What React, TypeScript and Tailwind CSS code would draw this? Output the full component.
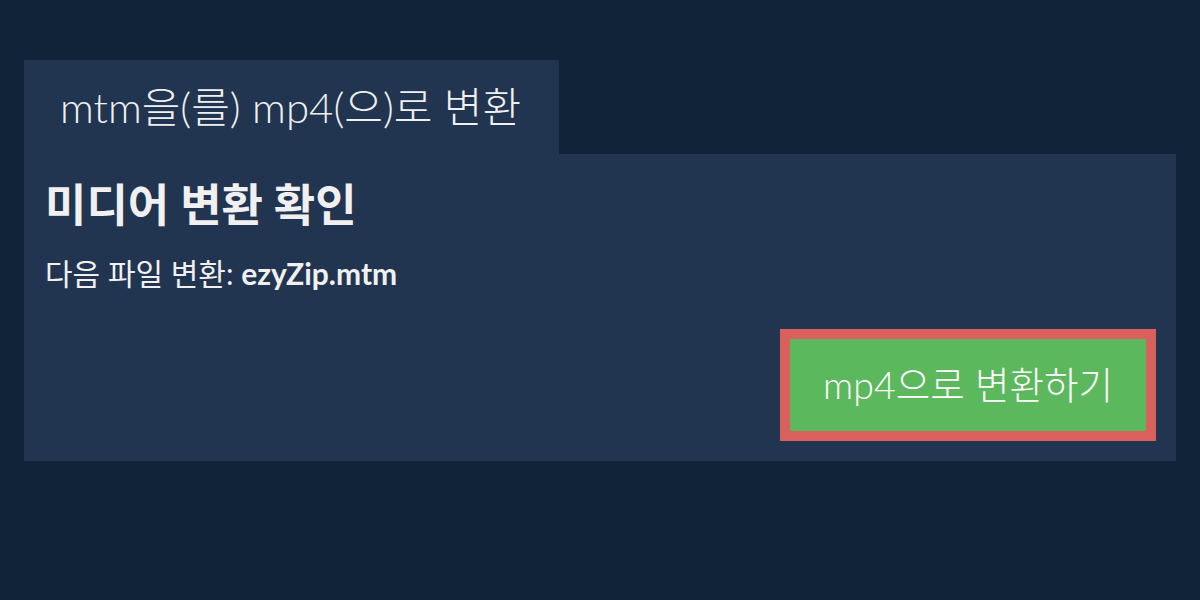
export default function App() {
  const font = { fontFamily: 'Lato, "Noto Sans CJK KR", sans-serif' };
  return (
    <div className="w-[1200px] h-[600px] bg-[#102339] pt-[60px] px-[24px]" style={font}>
      <div className="flex">
        <div className="h-[94px] bg-[#213550] pl-[36px] pr-[38px] flex items-center">
          <span className="text-[42px] font-light text-[#f0f0f0] leading-none">mtm을(를) mp4(으)로 변환</span>
        </div>
      </div>
      <div className="h-[307px] bg-[#213550] pl-[21px] pr-[20px] pt-[24px] flex flex-col">
        <h1 className="text-[45px] font-bold text-[#f0f0f0] leading-[54px]">미디어 변환 확인</h1>
        <p className="mt-[24px] text-[30px] text-[#f0f0f0] leading-[34px]">
          다음 파일 변환: <b className="font-bold">ezyZip.mtm</b>
        </p>
        <div className="flex justify-end mt-[39px]">
          <button className="w-[376px] h-[112px] border-[10px] border-[#d9605c] bg-[#5cb85c] text-white text-[37.5px] font-light">
            mp4으로 변환하기
          </button>
        </div>
      </div>
    </div>
  );
}
